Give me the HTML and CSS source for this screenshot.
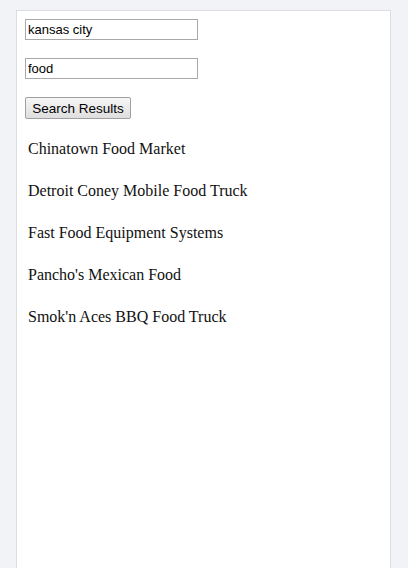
FILE: index.html
```html
<!DOCTYPE html>
<html>
<head>
<meta charset="utf-8">
<link rel="stylesheet" href="styles.css">
</head>
<body>
<div class="card">
  <input class="field" type="text" value="kansas city">
  <input class="field" type="text" value="food">
  <button class="btn" type="button">Search Results</button>
  <ul class="results">
    <li>Chinatown Food Market</li>
    <li>Detroit Coney Mobile Food Truck</li>
    <li>Fast Food Equipment Systems</li>
    <li>Pancho's Mexican Food</li>
    <li>Smok'n Aces BBQ Food Truck</li>
  </ul>
</div>
</body>
</html>
```
FILE: styles.css
```css
html, body {
  margin: 0;
  padding: 0;
  background: #f2f3f7;
  height: 100%;
  overflow: hidden;
}
.card {
  box-sizing: border-box;
  margin: 10px 0 0 16px;
  width: 375px;
  height: 558px;
  background: #fff;
  border: 1px solid #dcdde3;
  border-bottom: none;
  padding: 8px;
}
.field {
  display: block;
  box-sizing: border-box;
  width: 173px;
  height: 21px;
  margin: 0 0 18px 0;
  padding: 0 2px;
  border: 1px solid #a9a9a9;
  font-family: "Liberation Sans", Arial, sans-serif;
  font-size: 13px;
  color: #000;
  background: #fff;
}
.btn {
  display: block;
  box-sizing: border-box;
  width: 106px;
  height: 22px;
  margin: 0;
  padding: 0;
  white-space: nowrap;
  border: 1px solid #a0a0a0;
  border-radius: 2px;
  background: linear-gradient(#f6f6f6, #dedede);
  font-family: "Liberation Sans", Arial, sans-serif;
  font-size: 13.5px;
  color: #000;
}
.results {
  list-style: none;
  margin: 9px 0 0 0;
  padding: 0;
}
.results li {
  padding: 12px 3px;
  line-height: 18px;
  font-family: "Liberation Serif", "Times New Roman", serif;
  font-size: 16px;
  color: #111;
}
```
